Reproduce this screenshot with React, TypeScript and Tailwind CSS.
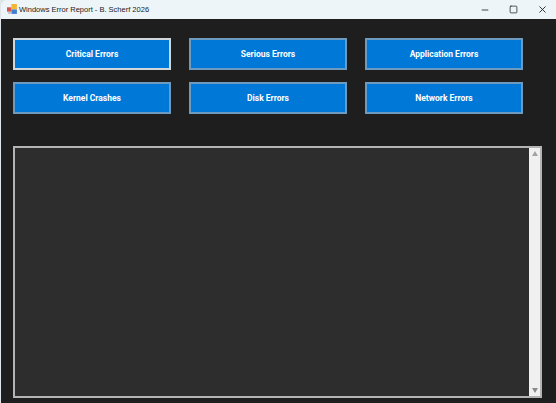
import React from 'react';
import { Minus, Square, X } from 'lucide-react';

const rows = [
  ['Critical Errors', 'Serious Errors', 'Application Errors'],
  ['Kernel Crashes', 'Disk Errors', 'Network Errors'],
];

function AppIcon() {
  return (
    <svg width="11" height="11" viewBox="0 0 10 10" className="shrink-0">
      <rect x="0" y="3" width="4" height="4" fill="#d9534a" />
      <rect x="4" y="0" width="5" height="5" fill="#f2b632" />
      <rect x="4" y="5" width="5" height="4" fill="#3f7fd0" />
      <rect x="1" y="7" width="3" height="2" fill="#b8c4d0" />
    </svg>
  );
}

export default function App() {
  return (
    <div className="w-[556px] h-[403px] overflow-hidden bg-[#dfe5e8] pl-px font-['Roboto',sans-serif]">
      {/* title bar */}
      <div className="h-[19px] bg-[#eef5f9] flex items-center pl-[6px] rounded-tl-md">
        <AppIcon />
        <span className="ml-[1px] text-[7.5px] text-[#1a1a1a] font-['Liberation_Sans',sans-serif]">Windows Error Report - B. Scherf 2026</span>
        <div className="ml-auto flex items-center text-[#222]">
          <span className="w-[28px] flex justify-center"><Minus size={10} strokeWidth={2} /></span>
          <span className="w-[29px] flex justify-center"><Square size={9} strokeWidth={2} /></span>
          <span className="w-[28px] flex justify-center"><X size={11} strokeWidth={2} /></span>
        </div>
      </div>

      <div className="h-[384px] bg-[#1e1e1e] pl-[12px] pt-[19px]">
        <div className="flex flex-col gap-[12px]">
          {rows.map((row, i) => (
            <div key={i} className="flex gap-[18px]">
              {row.map((label, j) => (
                <button
                  key={label}
                  className={`w-[158px] h-[32px] bg-[#0078d7] text-white text-[8.5px] font-bold ${
                    i === 0 && j === 0 ? 'border-2 border-[#d0d6da]' : 'border-2 border-[#6f9ac0]'
                  }`}
                >
                  {label}
                </button>
              ))}
            </div>
          ))}
        </div>

        {/* log box */}
        <div className="mt-[32px] w-[529px] h-[252px] border-2 border-[#b4b4b4] bg-[#2d2d2d] flex justify-end">
          <div className="w-[11px] bg-[#f0f0f0] flex flex-col items-center justify-between py-[3px]">
            <span className="w-0 h-0 border-x-[3.5px] border-x-transparent border-b-[5px] border-b-[#a3a3a3]" />
            <span className="w-0 h-0 border-x-[3.5px] border-x-transparent border-t-[5px] border-t-[#8a8a8a]" />
          </div>
        </div>
      </div>
    </div>
  );
}
